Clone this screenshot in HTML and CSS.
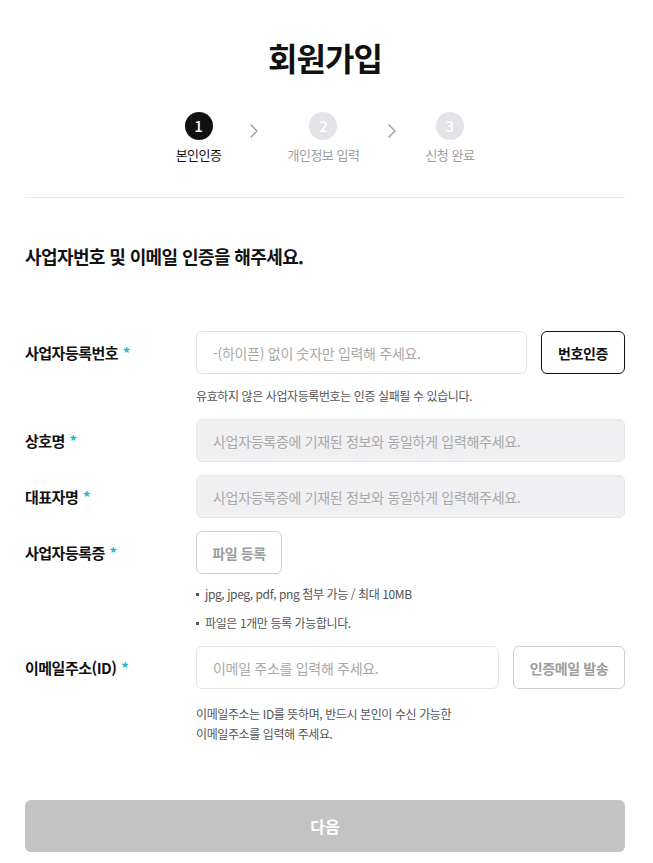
FILE: index.html
```html
<!DOCTYPE html>
<html lang="ko">
<head>
  <meta charset="UTF-8">
  <title>회원가입</title>
  <meta name="viewport" content="width=device-width, initial-scale=1.0">
  <link rel="stylesheet" href="styles.css">
</head>
<body>

<div class="container">
  <h1 class="title">회원가입</h1>

  <div class="steps">
    <div class="step active">
      <span class="num">1</span>
      <span class="label">본인인증</span>
    </div>
    <svg class="arrow" width="10" height="16" viewBox="0 0 10 16"><path d="M1.5 1.5 L8 8 L1.5 14.5" fill="none" stroke="#9a9a9a" stroke-width="1.3"/></svg>
    <div class="step">
      <span class="num">2</span>
      <span class="label">개인정보 입력</span>
    </div>
    <svg class="arrow" width="10" height="16" viewBox="0 0 10 16"><path d="M1.5 1.5 L8 8 L1.5 14.5" fill="none" stroke="#9a9a9a" stroke-width="1.3"/></svg>
    <div class="step">
      <span class="num">3</span>
      <span class="label">신청 완료</span>
    </div>
  </div>

  <h2 class="sub-title">사업자번호 및 이메일 인증을 해주세요.</h2>

  <div class="form">
    <div class="row">
      <label class="row-label">사업자등록번호 <em>*</em></label>
      <div class="field">
        <div class="inline">
          <input class="input" type="text" placeholder="-(하이픈) 없이 숫자만 입력해 주세요.">
          <button class="btn btn-dark">번호인증</button>
        </div>
        <p class="help">유효하지 않은 사업자등록번호는 인증 실패될 수 있습니다.</p>
      </div>
    </div>

    <div class="row">
      <label class="row-label">상호명 <em>*</em></label>
      <div class="field">
        <input class="input disabled" type="text" placeholder="사업자등록증에 기재된 정보와 동일하게 입력해주세요." disabled>
      </div>
    </div>

    <div class="row">
      <label class="row-label">대표자명 <em>*</em></label>
      <div class="field">
        <input class="input disabled" type="text" placeholder="사업자등록증에 기재된 정보와 동일하게 입력해주세요." disabled>
      </div>
    </div>

    <div class="row">
      <label class="row-label">사업자등록증 <em>*</em></label>
      <div class="field">
        <button class="btn btn-file">파일 등록</button>
        <ul class="notes">
          <li>jpg, jpeg, pdf, png 첨부 가능 / 최대 10MB</li>
          <li>파일은 1개만 등록 가능합니다.</li>
        </ul>
      </div>
    </div>

    <div class="row">
      <label class="row-label">이메일주소(ID) <em>*</em></label>
      <div class="field">
        <div class="inline">
          <input class="input" type="text" placeholder="이메일 주소를 입력해 주세요.">
          <button class="btn btn-gray">인증메일 발송</button>
        </div>
        <p class="help two">이메일주소는 ID를 뜻하며, 반드시 본인이 수신 가능한<br>이메일주소를 입력해 주세요.</p>
      </div>
    </div>
  </div>

  <button class="next" disabled>다음</button>
</div>

</body>
</html>
```

FILE: styles.css
```css
body {
  margin: 0;
  padding: 0;
  background: #fff;
  color: #111;
  font-family: "Noto Sans CJK KR", "Noto Sans", sans-serif;
}

.container {
  width: 600px;
  margin: 0 25px;
}

.title {
  margin: 0;
  padding-top: 33px;
  height: 48px;
  line-height: 48px;
  text-align: center;
  font-size: 32px;
  font-weight: 700;
  letter-spacing: -1px;
}

.steps {
  display: flex;
  justify-content: center;
  align-items: flex-start;
  gap: 28px;
  margin-top: 31px;
  padding-bottom: 33px;
  border-bottom: 1px solid #e6e6ec;
}

.step {
  display: flex;
  flex-direction: column;
  align-items: center;
}

.step .num {
  width: 28px;
  height: 28px;
  border-radius: 50%;
  background: #e3e3e8;
  color: #fff;
  font-size: 15px;
  font-weight: 500;
  line-height: 28px;
  text-align: center;
}

.step .label {
  margin-top: 6px;
  font-size: 13px;
  line-height: 18px;
  color: #9d9d9d;
  letter-spacing: -0.5px;
  white-space: nowrap;
}

.step.active .num {
  background: #111;
}

.step.active .label {
  color: #111;
}

.arrow {
  margin-top: 11px;
}

.sub-title {
  margin: 45px 0 0;
  font-size: 18px;
  line-height: 26px;
  font-weight: 700;
  letter-spacing: -0.6px;
}

.form {
  margin-top: 62px;
}

.row {
  display: flex;
  margin-bottom: 13px;
}

.row-label {
  width: 171px;
  flex-shrink: 0;
  height: 43px;
  line-height: 43px;
  font-size: 15px;
  font-weight: 700;
  letter-spacing: -0.5px;
}

.row-label em {
  font-style: normal;
  color: #1fb6d6;
  margin-left: 1px;
}

.field {
  flex: 1;
}

.inline {
  display: flex;
  gap: 14px;
}

.input {
  flex: 1;
  box-sizing: border-box;
  width: 100%;
  height: 43px;
  padding: 0 16px;
  border: 1px solid #e3e3e3;
  border-radius: 6px;
  font-family: inherit;
  font-size: 14px;
  letter-spacing: -0.3px;
  outline: none;
  background: #fff;
}

.input::placeholder {
  color: #a8a8a8;
}

.input.disabled {
  background: #f0f0f3;
  border-color: #e6e6ea;
}

.btn {
  box-sizing: border-box;
  height: 43px;
  border-radius: 6px;
  background: #fff;
  font-family: inherit;
  font-size: 14px;
  font-weight: 700;
  letter-spacing: -0.4px;
  cursor: pointer;
}

.btn-dark {
  width: 84px;
  border: 1px solid #111;
  color: #111;
}

.btn-gray {
  width: 112px;
  border: 1px solid #cfcfcf;
  color: #9d9d9d;
}

.btn-file {
  width: 86px;
  border: 1px solid #cfcfcf;
  color: #9d9d9d;
}

.help {
  margin: 12px 0 0;
  font-size: 12px;
  line-height: 20px;
  color: #555;
  letter-spacing: -0.4px;
}

.help.two {
  margin-top: 15px;
}

.notes {
  list-style: none;
  margin: 10px 0 0;
  padding: 0;
}

.notes li {
  position: relative;
  padding-left: 9px;
  font-size: 12px;
  line-height: 20px;
  color: #555;
  letter-spacing: -0.4px;
}

.notes li + li {
  margin-top: 9px;
}

.notes li::before {
  content: "";
  position: absolute;
  left: 0;
  top: 9px;
  width: 3px;
  height: 3px;
  background: #555;
}

.next {
  display: block;
  width: 100%;
  height: 52px;
  margin-top: 56px;
  border: none;
  border-radius: 6px;
  background: #c3c3c3;
  color: #fff;
  font-family: inherit;
  font-size: 16px;
  font-weight: 700;
}
```
